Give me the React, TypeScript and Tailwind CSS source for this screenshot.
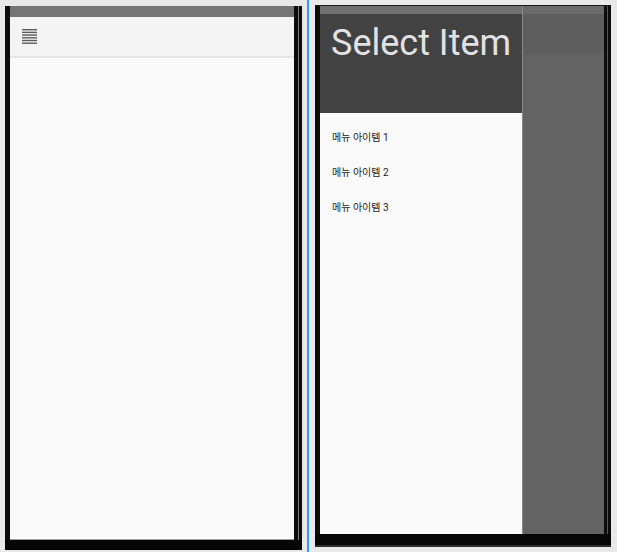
const items = ["메뉴 아이템 1", "메뉴 아이템 2", "메뉴 아이템 3"];

const MenuIcon = () => (
  <svg width="15" height="15" viewBox="0 0 15 15">
    {[0, 2.7, 5.4, 8.1, 10.8, 13.5].map((y) => (
      <rect key={y} x="0" y={y} width="15" height="1.4" fill="#5c5c5c" />
    ))}
  </svg>
);

const App = () => {
  return (
    <div className="w-[617px] h-[552px] bg-[#e9e9e9] flex items-start font-['Roboto','Noto_Sans_CJK_KR',sans-serif]">
      {/* left phone: closed drawer */}
      <div className="ml-[5px] mt-[6px] w-[297px] h-[544px] flex flex-col">
        <div className="flex flex-1">
          <div className="w-[5px] bg-[#0c0c0c]" />
          <div className="w-[284px] flex flex-col bg-[#fafafa] border-b border-[#9e9e9e]">
            <div className="h-[11px] bg-[#757575]" />
            <div className="h-[41px] bg-[#f4f4f4] border-b-2 border-[#e6e6e6] flex items-center pl-[12px]">
              <MenuIcon />
            </div>
          </div>
          <div className="w-[4px] bg-[#0c0c0c]" />
          <div className="w-[1px] bg-[#7a7a7a]" />
          <div className="w-[3px] bg-[#0c0c0c]" />
        </div>
        <div className="h-[10px] bg-[#060606]" />
      </div>

      <div className="ml-[5px] w-[2px] h-[552px] bg-[#29a3f0]" />

      {/* right phone: open drawer */}
      <div className="ml-[6px] mt-[5px] w-[296px] h-[542px] flex flex-col">
        <div className="h-[1px] bg-[#1a1a1a]" />
        <div className="flex flex-1">
          <div className="w-[5px] bg-[#0c0c0c]" />
          <div className="w-[284px] flex">
            <div className="w-[203px] flex flex-col bg-[#fafafa] border-r border-[#888]">
              <div className="h-[8px] bg-[#717171]" />
              <div className="h-[99px] bg-[#424242] pl-[11px] pt-[8px]">
                <div className="text-[36px] leading-[42px] text-[#e2e2e2]">Select Item</div>
              </div>
              <div className="pt-[7px] flex flex-col">
                {items.map((item) => (
                  <div key={item} className="h-[35px] flex items-center pl-[12px] text-[10px] text-[#222]">
                    {item}
                  </div>
                ))}
              </div>
            </div>
            <div className="flex-1 flex flex-col bg-[#636363]">
              <div className="h-[8px] bg-[#6a6a6a]" />
              <div className="h-[41px] bg-[#5e5e5e]" />
            </div>
          </div>
          <div className="w-[3px] bg-[#0c0c0c]" />
          <div className="w-[1px] bg-[#555]" />
          <div className="w-[3px] bg-[#0c0c0c]" />
        </div>
        <div className="h-[11px] bg-[#060606]" />
        <div className="h-[2px] bg-[#2e2e2e]" />
      </div>
    </div>
  );
};

export default App;
